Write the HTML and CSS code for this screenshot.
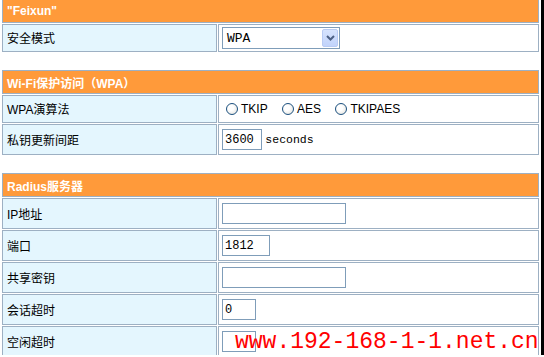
FILE: index.html
```html
<!DOCTYPE html>
<html lang="zh-CN">
<head>
    <meta charset="UTF-8">
    <title>无线安全设置</title>
    <link rel="stylesheet" href="styles.css">
</head>
<body>
    <div class="frame">
        <table class="section first">
            <tr><td colspan="2" class="head">"Feixun"</td></tr>
            <tr class="row-select">
                <td class="label">安全模式</td>
                <td class="value">
                    <div class="select">
                        <span class="select-text">WPA</span>
                        <span class="select-btn">
                            <svg width="9" height="6" viewBox="0 0 9 6"><path d="M1 1 L4.5 4.5 L8 1" fill="none" stroke="#4d6185" stroke-width="2"/></svg>
                        </span>
                    </div>
                </td>
            </tr>
        </table>

        <table class="section">
            <tr><td colspan="2" class="head">Wi-Fi保护访问（WPA）</td></tr>
            <tr class="row-radio">
                <td class="label">WPA演算法</td>
                <td class="value">
                    <label class="radio"><span class="dot"></span>TKIP</label>
                    <label class="radio"><span class="dot"></span>AES</label>
                    <label class="radio"><span class="dot"></span>TKIPAES</label>
                </td>
            </tr>
            <tr>
                <td class="label">私钥更新间距</td>
                <td class="value"><input class="field short" type="text" value="3600"> <span class="unit">seconds</span></td>
            </tr>
        </table>

        <table class="section">
            <tr><td colspan="2" class="head">Radius服务器</td></tr>
            <tr>
                <td class="label">IP地址</td>
                <td class="value"><input class="field long" type="text" value=""></td>
            </tr>
            <tr>
                <td class="label">端口</td>
                <td class="value"><input class="field mid" type="text" value="1812"></td>
            </tr>
            <tr>
                <td class="label">共享密钥</td>
                <td class="value"><input class="field long" type="text" value=""></td>
            </tr>
            <tr>
                <td class="label">会话超时</td>
                <td class="value"><input class="field tiny" type="text" value="0"></td>
            </tr>
            <tr>
                <td class="label">空闲超时</td>
                <td class="value"><input class="field tiny" type="text" value=""></td>
            </tr>
        </table>

        <div class="watermark">www.192-168-1-1.net.cn</div>
    </div>
</body>
</html>
```

FILE: styles.css
```css
* {
    box-sizing: border-box;
}
html, body {
    margin: 0;
    padding: 0;
    background-color: #fff;
    overflow: hidden;
}
body {
    font-family: 'Liberation Sans', 'Noto Sans CJK SC', sans-serif;
    font-size: 12px;
    color: #000;
}
.frame {
    position: relative;
    width: 544px;
    height: 357px;
    border-right: 3px solid #000;
    padding-left: 1px;
}
.section {
    width: 539px;
    border-collapse: separate;
    border-spacing: 1px;
    margin-bottom: 16px;
}
.section.first {
    margin-top: -2px;
}
.section td {
    border: 1px solid #9db0c3;
    padding: 0 0 0 4px;
}
.head {
    height: 24px;
    background-color: #ff9a3a;
    color: #fff;
    font-weight: bold;
    font-size: 12px;
}
.label {
    width: 215px;
    height: 31px;
    background-color: #e4f6fe;
    padding-bottom: 1px !important;
}
.row-select .label,
.row-radio .label {
    height: 28px;
}
.value {
    background-color: #fff;
    padding-left: 3px !important;
}
.select {
    display: flex;
    align-items: center;
    justify-content: space-between;
    width: 118px;
    height: 22px;
    border: 1px solid #7f9db9;
    padding: 1px 1px 1px 4px;
}
.select-text {
    font-family: 'Liberation Mono', monospace;
    font-size: 13px;
}
.select-btn {
    display: flex;
    align-items: center;
    justify-content: center;
    width: 16px;
    height: 18px;
    border: 1px solid #b8cbf4;
    border-radius: 2px;
    background: linear-gradient(#d6e3fd, #c1d3fb);
}
.row-radio .value {
    padding-left: 7px !important;
    padding-top: 2px !important;
}
.radio {
    display: inline-flex;
    align-items: center;
    gap: 3px;
    margin-right: 11px;
    font-size: 12px;
}
.dot {
    width: 12px;
    height: 12px;
    border: 1px solid #1c5180;
    border-radius: 50%;
    background: radial-gradient(circle at 40% 40%, #fff 30%, #dcdcd6);
}
.field {
    height: 21px;
    border: 1px solid #7f9db9;
    padding: 0 2px;
    font-family: 'Liberation Mono', monospace;
    font-size: 12px;
    vertical-align: middle;
}
.field.short {
    width: 40px;
}
.field.mid {
    width: 48px;
}
.field.long {
    width: 124px;
}
.field.tiny {
    width: 34px;
}
.unit {
    font-family: 'Liberation Mono', monospace;
    font-size: 11.5px;
    vertical-align: middle;
}
.watermark {
    position: absolute;
    left: 235px;
    top: 332px;
    color: #f00;
    font-family: 'Liberation Mono', monospace;
    font-size: 23px;
    line-height: 24px;
}
```
